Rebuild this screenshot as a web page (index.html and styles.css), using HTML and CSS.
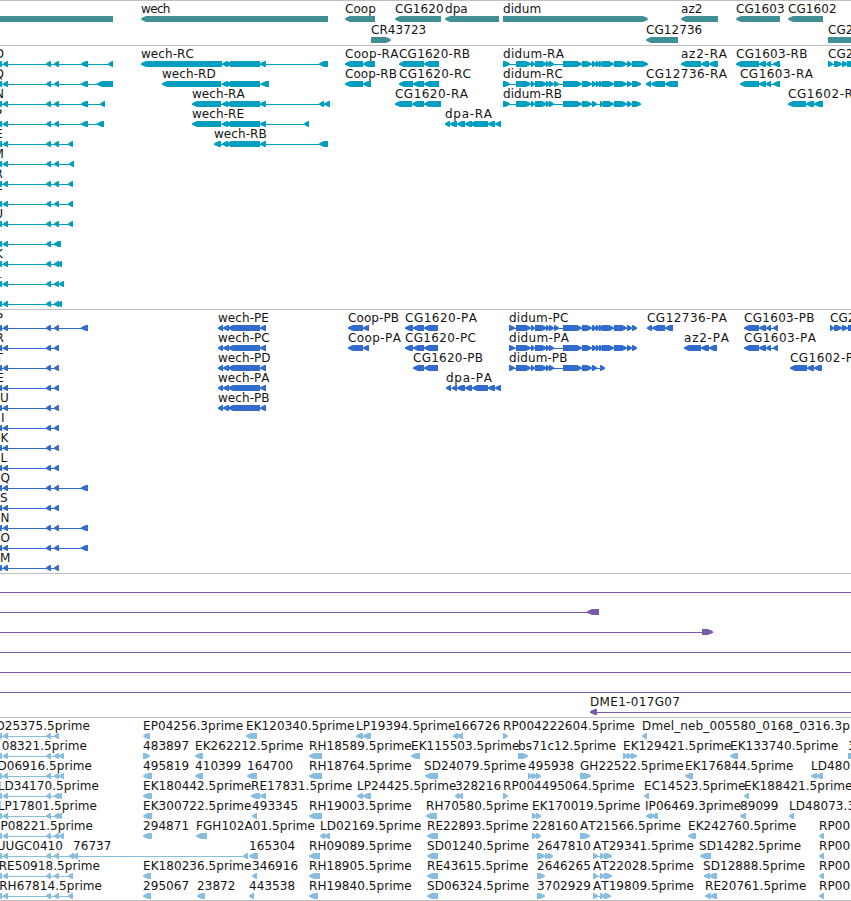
FILE: index.html
```
<!DOCTYPE html>
<html lang="en">
<head>
    <meta charset="UTF-8">
    <meta name="viewport" content="width=device-width, initial-scale=1.0">
    <title>Genome Browser</title>
    <link rel="stylesheet" href="styles.css">
</head>
<body>
    <main class="browser">
        <section class="track genes"><svg id="genes"></svg></section>
        <section class="track transcripts"><svg id="transcripts"></svg></section>
        <section class="track proteins"><svg id="proteins"></svg></section>
        <section class="track clones"><svg id="clones"></svg></section>
        <section class="track ests"><svg id="ests"></svg></section>
    </main>

    <script src="script.js"></script>
</body>
</html>
```
FILE: styles.css
```
body {
    margin: 0;
    background-color: white;
    overflow: hidden;
}

.browser {
    display: flex;
    flex-direction: column;
    height: 900px;
    border-bottom: 1px solid #bfbfbf;
}

.track {
    box-sizing: border-box;
    border-top: 1px solid #bfbfbf;
}

.track svg {
    display: block;
    width: 100%;
    height: 100%;
    overflow: hidden;
}

.track text {
    font-family: "DejaVu Sans", sans-serif;
    font-size: 12px;
    font-kerning: none;
    letter-spacing: 0.06px;
    fill: #141414;
}

.genes {
    height: 45px;
    color: #408f95;
}

.transcripts {
    height: 264px;
    color: #009fc0;
}

.proteins {
    height: 264px;
    color: #316ccc;
}

.clones {
    height: 144px;
    color: #7859a8;
}

.ests {
    height: 183px;
    color: #88bddd;
}

.glyph {
    fill: currentColor;
}
```
FILE: script.js
```
const SVG = "http://www.w3.org/2000/svg";
const TOP = 15;
const BAR = 6;

// exons shared by several transcripts
const left = [[-4, 2], [3, 8], [46, 51], [54, 59]];
const wech = [[222, 228], [226, 260]];
const didum = [[516, 531], [531, 535], [535, 547]];
const didumMid = [[563, 582], [582, 592], [592, 597]];
const didumEnd = [[596, 600], [599, 604], [602, 614], [614, 627], [627, 632]];
const cg1603 = [[759, 766], [766, 771], [773, 780]];

// labels set to a fixed width
const labelWidths = {
    "wech": 29.5,
    "Coop-RA": 53.5, "Coop-RB": 52, "Coop-PB": 51, "Coop-PA": 53,
    "CG1620-RB": 71, "CG1620-RC": 72, "CG1620-RA": 73,
    "CG1620-PA": 72, "CG1620-PC": 71, "CG1620-PB": 70,
    "dpa-RA": 47, "dpa-PA": 46,
    "didum-RA": 61, "didum-RC": 60, "didum-RB": 59,
    "didum-PC": 59.5, "didum-PA": 60, "didum-PB": 58.5,
    "CG12736-RA": 81, "CG12736-PA": 80,
    "az2-RA": 46, "az2-PA": 45,
    "CG1603-RB": 71.5, "CG1603-RA": 73, "CG1603-PB": 70.5, "CG1603-PA": 72,
    "CG1602-R": 65, "CG1602-P": 63,
    "DME1-017G07": 90,
    "Dmel_neb_005580_0168_0316.3p": 208
};

// each feature: row, direction, label x, label, segments, "end" when x is the label's right side
const genes = [
    [0, "", 0, "", [[-5, 113]]],
    [0, "<", 141, "wech", [[141, 328]]],
    [0, "<", 345, "Coop", [[345, 375]]],
    [0, "<", 395, "CG1620", [[395, 441]]],
    [0, "<", 445, "dpa", [[445, 499]]],
    [0, ">", 503, "didum", [[503, 648]]],
    [0, "<", 681, "az2", [[681, 718]]],
    [0, "<", 736, "CG1603", [[736, 780]]],
    [0, "<", 788, "CG1602", [[788, 823]]],
    [1, ">", 371, "CR43723", [[371, 391]]],
    [1, "<", 646, "CG12736", [[646, 678]]],
    [1, ">", 828, "CG2", [[828, 870]]]
];

const transcripts = [
    [0, "<", 4, "D", [...left, [81, 88], [108, 113]], "end"],
    [1, "<", 4, "Q", [...left, [81, 88], [97, 113]], "end"],
    [2, "<", 4, "N", [...left, [81, 88], [100, 105]], "end"],
    [3, "<", 2, "P", [...left, [81, 88], [97, 104]], "end"],
    [4, "<", 3, "E", [...left, [68, 73]], "end"],
    [5, "<", 4, "M", [...left, [69, 74]], "end"],
    [6, "<", 3, "R", [...left, [68, 73]], "end"],
    [7, "<", 2, "T", [...left, [68, 73]], "end"],
    [8, "<", 3, "U", [...left, [68, 73]], "end"],
    [9, "<", 0, "", [...left, [56, 61]]],
    [10, "<", 3, "K", [...left, [57, 62]], "end"],
    [11, "<", 1, "L", [...left, [59, 64]], "end"],
    [12, "<", 0, "", [...left, [57, 62]]],

    [0, "<", 141, "wech-RC", [[141, 222], ...wech, [260, 266], [319, 328]]],
    [1, "<", 162, "wech-RD", [[162, 221], ...wech, [261, 269]]],
    [2, "<", 192, "wech-RA", [[192, 221], ...wech, [260, 266], [319, 324], [324, 330]]],
    [3, "<", 192, "wech-RE", [[192, 221], ...wech, [260, 266], [304, 309]]],
    [4, "<", 214, "wech-RB", [[214, 221], ...wech, [260, 266], [319, 328]]],

    [0, "<", 345, "Coop-RA", [[345, 363], [363, 375]]],
    [1, "<", 345, "Coop-RB", [[345, 363], [363, 371]]],
    [0, "<", 399, "CG1620-RB", [[399, 424], [424, 439]]],
    [1, "<", 399, "CG1620-RC", [[399, 413], [413, 424], [424, 439]]],
    [2, "<", 395, "CG1620-RA", [[395, 412], [412, 424], [424, 441]]],
    [3, "<", 445, "dpa-RA", [[445, 450], [450, 457], [457, 465], [465, 472], [470, 488], [488, 495], [495, 501]]],

    [0, ">", 503, "didum-RA", [[503, 510], ...didum, [546, 550], [549, 554], ...didumMid, ...didumEnd, [632, 648]]],
    [1, ">", 503, "didum-RC", [[503, 510], ...didum, [546, 550], [549, 554], [554, 559], ...didumMid, ...didumEnd, [632, 641]]],
    [2, ">", 503, "didum-RB", [[503, 510], ...didum, [546, 550], [549, 554], ...didumMid, [600, 604], [603, 614], [614, 627], [627, 632], [632, 641]]],

    [1, "<", 646, "CG12736-RA", [[646, 651], [651, 665], [665, 678]]],
    [0, "<", 681, "az2-RA", [[681, 701], [701, 709], [709, 718]]],
    [0, "<", 736, "CG1603-RB", [[736, 759], ...cg1603]],
    [1, "<", 740, "CG1603-RA", [[740, 759], ...cg1603]],
    [2, "<", 788, "CG1602-R", [[788, 806], [806, 814], [814, 823]]],
    [0, ">", 828, "CG2", [[828, 833], [834, 842], [842, 848], [847, 856]]]
];

const wechP = [[218, 223], [223, 229], [228, 260], [260, 266]];
const didumPEnd = [[596, 600], [599, 604], [602, 614], [614, 627], [627, 632], [632, 637]];
const cg1603P = [[744, 759], [759, 766], [766, 771], [773, 778]];

const proteins = [
    [0, "<", 3, "P", [...left, [81, 88]], "end"],
    [1, "<", 4, "R", [...left], "end"],
    [2, "<", 3, "T", [...left], "end"],
    [3, "<", 4, "E", [...left], "end"],
    [4, "<", 0, "U", [...left]],
    [5, "<", 1, "I", [...left]],
    [6, "<", 0.5, "K", [...left]],
    [7, "<", 0.5, "L", [...left]],
    [8, "<", 0.5, "Q", [...left, [81, 88]]],
    [9, "<", 0, "S", [...left]],
    [10, "<", 0.5, "N", [...left, [81, 88]]],
    [11, "<", 0.5, "O", [...left, [81, 88]]],
    [12, "<", 0, "M", [...left]],

    [0, "<", 218, "wech-PE", wechP],
    [1, "<", 218, "wech-PC", wechP],
    [2, "<", 218, "wech-PD", wechP],
    [3, "<", 218, "wech-PA", wechP],
    [4, "<", 218, "wech-PB", wechP],

    [0, "<", 348, "Coop-PB", [[348, 363], [363, 369]]],
    [1, "<", 348, "Coop-PA", [[348, 363], [363, 369]]],
    [0, "<", 405, "CG1620-PA", [[405, 413], [413, 424], [424, 438]]],
    [1, "<", 405, "CG1620-PC", [[405, 413], [413, 424], [424, 438]]],
    [2, "<", 413, "CG1620-PB", [[413, 424], [424, 438]]],
    [3, "<", 446, "dpa-PA", [[446, 451], [452, 457], [457, 465], [465, 472], [472, 488], [488, 495], [495, 501]]],

    [0, ">", 509, "didum-PC", [[509, 515], ...didum, [546, 550], [549, 554], [554, 559], ...didumMid, ...didumPEnd]],
    [1, ">", 509, "didum-PA", [[509, 515], ...didum, [546, 550], [549, 554], ...didumMid, ...didumPEnd]],
    [2, ">", 509, "didum-PB", [[509, 515], ...didum, [546, 550], [549, 554], ...didumMid, [600, 605]]],

    [0, "<", 647, "CG12736-PA", [[647, 652], [652, 665], [665, 673]]],
    [1, "<", 684, "az2-PA", [[684, 701], [701, 709], [709, 717]]],
    [0, "<", 744, "CG1603-PB", cg1603P],
    [1, "<", 744, "CG1603-PA", cg1603P],
    [2, "<", 790, "CG1602-P", [[790, 807], [807, 814], [814, 822]]],
    [0, ">", 830, "CG2", [[830, 834], [834, 842], [842, 848], [848, 856]]]
];

const clones = [
    [0, "", 0, "", [[-9, -5], [860, 865]]],
    [1, "<", 0, "", [[-9, -5], [587, 599]]],
    [2, ">", 0, "", [[-9, -5], [702, 713]]],
    [3, "", 0, "", [[-9, -5], [860, 865]]],
    [4, "", 0, "", [[-9, -5], [860, 865]]],
    [5, "", 0, "", [[-9, -5], [860, 865]]],
    [6, "<", 590, "DME1-017G07", [[590, 597], [860, 865]]]
];

const ests = [
    [0, "<", 90, "D25375.5prime", [...left], "end"],
    [0, "<", 143, "EP04256.3prime", [[143, 150]]],
    [0, "<", 246, "EK120340.5prime", [[246, 257]]],
    [0, "<", 356, "LP19394.5prime", [[356, 363], [363, 371]]],
    [0, "<", 454, "166726", [[453, 458], [457, 463]]],
    [0, ">", 503, "RP004222604.5prime", [[503, 508]]],
    [0, "<", 642, "Dmel_neb_005580_0168_0316.3p", [[642, 647]]],

    [1, "<", 87, "08321.5prime", [...left, [59, 64]], "end"],
    [1, ">", 143, "483897", [[143, 150]]],
    [1, "<", 195, "EK262212.5prime", [[195, 203]]],
    [1, "<", 309, "RH18589.5prime", [[309, 322]]],
    [1, "<", 411, "EK115503.5prime", [[411, 420]]],
    [1, ">", 518, "bs71c12.5prime", [[518, 528]]],
    [1, ">", 623, "EK129421.5prime", [[623, 628], [627, 632], [631, 637]]],
    [1, "<", 730, "EK133740.5prime", [[730, 738]]],
    [1, ">", 848, "3", [[848, 855]]],

    [2, "<", 92, "D06916.5prime", [...left, [59, 64]], "end"],
    [2, "<", 143, "495819", [[143, 152]]],
    [2, "<", 195, "410399", [[195, 203]]],
    [2, "<", 247, "164700", [[247, 257]]],
    [2, "<", 309, "RH18764.5prime", [[309, 322]]],
    [2, "<", 424, "SD24079.5prime", [[425, 438]]],
    [2, ">", 528, "495938", [[528, 533], [532, 537], [536, 541]]],
    [2, ">", 580, "GH22522.5prime", [[580, 591]]],
    [2, "<", 685, "EK176844.5prime", [[685, 693]]],
    [2, "<", 811, "LD480", [[811, 817], [816, 823]]],

    [3, "<", 99, "LD34170.5prime", [...left, [57, 62]], "end"],
    [3, "<", 143, "EK180442.5prime", [[143, 152]]],
    [3, "<", 251, "RE17831.5prime", [[251, 260], [260, 266]]],
    [3, "<", 357, "LP24425.5prime", [[357, 363], [363, 371]]],
    [3, "<", 455, "328216", [[455, 459], [458, 463]]],
    [3, ">", 503, "RP004495064.5prime", [[503, 508]]],
    [3, "<", 644, "EC14523.5prime", [[644, 649]]],
    [3, "<", 744, "EK188421.5prime", [[744, 749]]],

    [4, "<", 97, "LP17801.5prime", [...left, [57, 62]], "end"],
    [4, "<", 143, "EK300722.5prime", [[143, 152]]],
    [4, "<", 252, "493345", [[252, 257]]],
    [4, "<", 309, "RH19003.5prime", [[309, 322]]],
    [4, "<", 426, "RH70580.5prime", [[426, 437]]],
    [4, ">", 532, "EK170019.5prime", [[532, 537], [536, 541]]],
    [4, "<", 645, "IP06469.3prime", [[646, 652], [651, 658]]],
    [4, "<", 740, "89099", [[740, 746]]],
    [4, "<", 789, "LD48073.3", [[789, 794]]],

    [5, "<", 93, "P08221.5prime", [...left, [59, 64]], "end"],
    [5, "<", 143, "294871", [[143, 152]]],
    [5, "<", 196, "FGH102A01.5prime", [[196, 207]]],
    [5, "<", 320, "LD02169.5prime", [[320, 325], [324, 330]]],
    [5, "<", 427, "RE22893.5prime", [[427, 438]]],
    [5, ">", 532, "228160", [[532, 537], [536, 541]]],
    [5, ">", 580, "AT21566.5prime", [[580, 590]]],
    [5, "<", 688, "EK242760.5prime", [[688, 696]]],
    [5, "<", 819, "RP00", [[819, 824]]],

    [6, "<", 63, "UUGC0410", [...left, [69, 74]], "end"],
    [6, "<", 73, "76737", [[73, 78], [243, 248]]],
    [6, "<", 249, "165304", [[249, 258]]],
    [6, "<", 309, "RH09089.5prime", [[309, 320]]],
    [6, "<", 427, "SD01240.5prime", [[427, 438]]],
    [6, ">", 537, "2647810", [[537, 545], [545, 549], [548, 553]]],
    [6, ">", 593, "AT29341.5prime", [[593, 598], [600, 605], [604, 612]]],
    [6, "<", 699, "SD14282.5prime", [[700, 711]]],
    [6, "<", 819, "RP00", [[819, 824]]],

    [7, "<", 100, "RE50918.5prime", [...left, [68, 73]], "end"],
    [7, "<", 143, "EK180236.5prime", [[143, 151]]],
    [7, "<", 252, "346916", [[252, 257]]],
    [7, "<", 309, "RH18905.5prime", [[309, 320]]],
    [7, "<", 427, "RE43615.5prime", [[427, 438]]],
    [7, ">", 537, "2646265", [[537, 545]]],
    [7, ">", 593, "AT22028.5prime", [[593, 598], [600, 605], [604, 612]]],
    [7, "<", 703, "SD12888.5prime", [[704, 710], [709, 717]]],
    [7, "<", 819, "RP00", [[819, 824]]],

    [8, "<", 102, "RH67814.5prime", [...left, [68, 73]], "end"],
    [8, "<", 143, "295067", [[143, 151]]],
    [8, "<", 197, "23872", [[197, 205]]],
    [8, "<", 249, "443538", [[249, 254]]],
    [8, "<", 309, "RH19840.5prime", [[309, 318]]],
    [8, "<", 427, "SD06324.5prime", [[427, 438]]],
    [8, ">", 537, "3702929", [[537, 545]]],
    [8, ">", 593, "AT19809.5prime", [[593, 598], [600, 605], [604, 611]]],
    [8, "<", 705, "RE20761.5prime", [[705, 711], [710, 717]]],
    [8, "<", 819, "RP00", [[819, 824]]]
];

function add(parent, name, attrs) {
    const el = document.createElementNS(SVG, name);
    for (const key in attrs) {
        el.setAttribute(key, attrs[key]);
    }
    parent.appendChild(el);
    return el;
}

// Bar with a pointed end on the side of the strand
function segmentPath(x1, x2, y, dir) {
    const head = Math.min(5, x2 - x1 - 1);
    const mid = y + BAR / 2;
    const bottom = y + BAR;
    if (dir === "<") {
        return `M${x1 - 0.3} ${mid}L${x1 + 1} ${y + 1.8}L${x1 + head} ${y}H${x2}V${bottom}H${x1 + head}L${x1 + 1} ${bottom - 1.8}Z`;
    }
    if (dir === ">") {
        return `M${x1} ${y}V${bottom}H${x2 - head}L${x2 - 1} ${bottom - 1.8}L${x2 + 0.3} ${mid}L${x2 - 1} ${y + 1.8}L${x2 - head} ${y}Z`;
    }
    return `M${x1} ${y}H${x2}V${bottom}H${x1}Z`;
}

function drawTrack(id, features, pitch) {
    const svg = document.getElementById(id);
    features.forEach(([row, dir, x, label, segments, anchor]) => {
        const y = TOP + row * pitch;
        const first = segments[0][0];
        const last = segments[segments.length - 1][1];
        if (segments.length > 1) {
            add(svg, "rect", { class: "glyph", x: first, y: y + 3, width: last - first, height: 1 });
        }
        segments.forEach(([x1, x2]) => {
            add(svg, "path", { class: "glyph", d: segmentPath(x1, x2, y, dir) });
        });
        if (label) {
            const text = add(svg, "text", { x: x, y: y - 3, "text-anchor": anchor || "start" });
            text.textContent = label;
            if (labelWidths[label]) {
                text.setAttribute("textLength", labelWidths[label]);
            }
        }
    });
}

drawTrack("genes", genes, 21);
drawTrack("transcripts", transcripts, 20);
drawTrack("proteins", proteins, 20);
drawTrack("clones", clones, 20);
drawTrack("ests", ests, 20);
```
